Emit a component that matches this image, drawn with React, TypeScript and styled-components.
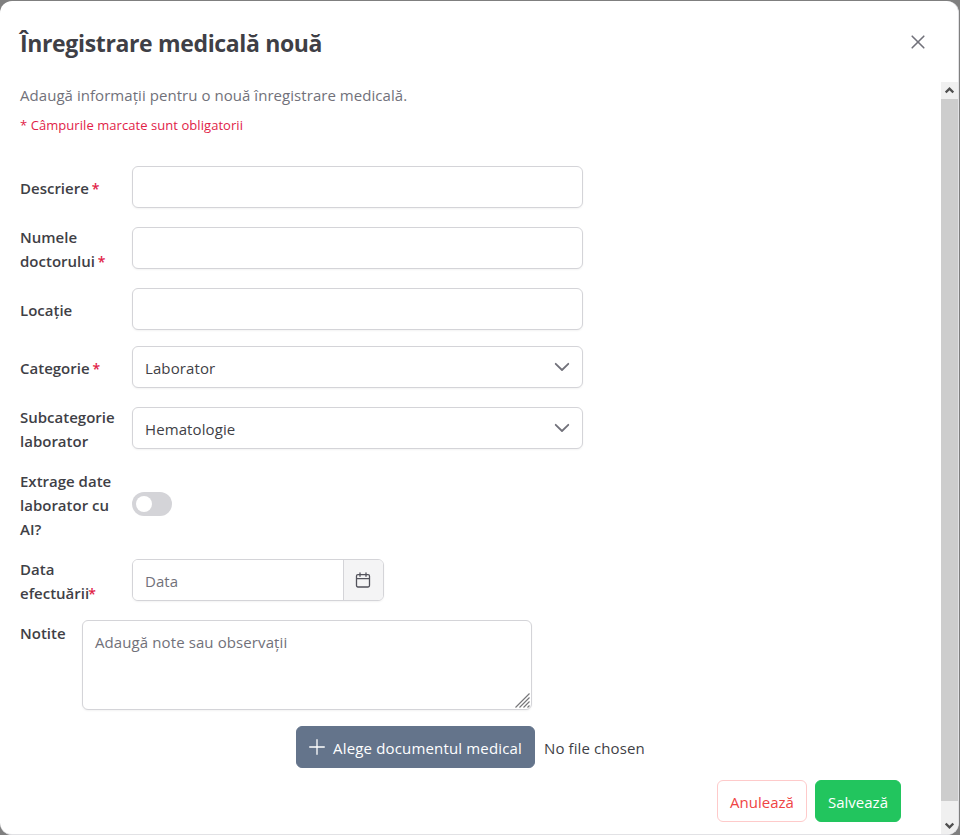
import React from "react";
import styled, { createGlobalStyle } from "styled-components";

const GlobalStyle = createGlobalStyle`
  * { box-sizing: border-box; }
  body { margin: 0; background: #7f7f7f; overflow: hidden; }
  body, input, textarea, button {
    font-family: "Open Sans", "Noto Sans", sans-serif;
    font-size: 15px;
    line-height: 24px;
    letter-spacing: 0.05px;
    color: #3f3f46;
  }
`;

const Dialog = styled.section`
  width: 959px;
  height: 834px;
  margin-top: 1px;
  display: flex;
  flex-direction: column;
  background: #fff;
  border: 1px solid #e2e2e5;
  border-left: 0;
  border-top: 0;
  border-radius: 12px;
  overflow: hidden;
`;

const Header = styled.header`
  flex: none;
  height: 81px;
  padding: 0 32px 0 20px;
  display: flex;
  align-items: center;
  justify-content: space-between;
`;

const Title = styled.h1`
  margin: 2px 0 0;
  font-size: 23px;
  font-weight: 700;
  line-height: 32px;
  letter-spacing: -0.35px;
`;

const CloseButton = styled.button`
  width: 16px;
  height: 16px;
  padding: 0;
  border: 0;
  background: none;
  color: #71717a;
  display: flex;
`;

const Body = styled.div`
  flex: 1;
  min-height: 0;
  display: flex;
`;

const Content = styled.div`
  flex: 1;
  padding: 0 0 0 20px;
`;

const Intro = styled.p`
  margin: 1px 0 0;
  color: #71717a;
`;

const RequiredNote = styled.p`
  margin: 9px 0 31px;
  font-size: 13px;
  line-height: 19px;
  letter-spacing: 0.06px;
  color: #e11d48;
`;

const Form = styled.div`
  display: flex;
  flex-direction: column;
  gap: 16px;
`;

const Row = styled.div<{ $top?: boolean }>`
  display: flex;
  align-items: ${(p) => (p.$top ? "flex-start" : "center")};
`;

const Label = styled.label<{ $width?: number }>`
  flex: none;
  width: ${(p) => p.$width ?? 112}px;
  font-weight: 600;
  letter-spacing: 0;
  position: relative;
  top: 1px;
`;

const Star = styled.span`
  color: #e11d48;
  font-size: 14px;
  line-height: 1;
  margin-left: -1px;
`;

const boxed = `
  border: 1px solid #d4d4d8;
  border-radius: 6px;
  background: #fff;
  box-shadow: 0 1px 2px rgba(18, 18, 23, 0.05);
`;

const TextInput = styled.input`
  ${boxed}
  width: 451px;
  height: 42px;
  padding: 8px 12px;
  outline: 0;
`;

const Select = styled.div`
  ${boxed}
  width: 451px;
  height: 42px;
  padding: 2px 12px 0 12px;
  display: flex;
  align-items: center;
  justify-content: space-between;
  letter-spacing: 0.1px;
  svg { margin-top: -2px; color: #71717a; }
`;

const Switch = styled.span`
  width: 40px;
  height: 24px;
  padding: 4px;
  border-radius: 12px;
  background: #d4d4d8;
  &::before {
    content: "";
    display: block;
    width: 16px;
    height: 16px;
    border-radius: 50%;
    background: #fff;
  }
`;

const DateField = styled.div`
  ${boxed}
  width: 252px;
  height: 42px;
  display: flex;
  overflow: hidden;
`;

const DateInput = styled.input`
  flex: 1;
  min-width: 0;
  border: 0;
  padding: 1px 12px 0;
  outline: 0;
  &::placeholder { color: #71717a; opacity: 1; }
`;

const DateButton = styled.button`
  width: 40px;
  padding: 0 2px 0 0;
  border: 0;
  border-left: 1px solid #d4d4d8;
  background: #f4f4f5;
  color: #52525b;
  display: flex;
  align-items: center;
  justify-content: center;
`;

const NotesWrap = styled.div`
  ${boxed}
  width: 450px;
  height: 90px;
  display: flex;
  position: relative;
`;

const Notes = styled.textarea`
  flex: 1;
  border: 0;
  padding: 9px 12px;
  background: none;
  resize: none;
  outline: 0;
  letter-spacing: 0.1px;
  &::placeholder { color: #71717a; opacity: 1; }
`;

const Grip = styled.svg`
  position: absolute;
  right: 0;
  bottom: 0;
`;

const Upload = styled.div`
  display: flex;
  align-items: center;
  gap: 9px;
  padding-left: 276px;
`;

const UploadText = styled.span`
  padding-top: 2px;
  letter-spacing: 0.1px;
`;

const Button = styled.button<{ $tone: "slate" | "green" | "danger"; $width: number }>`
  width: ${(p) => p.$width}px;
  height: 42px;
  padding: 2px 0 0;
  display: flex;
  align-items: center;
  justify-content: center;
  gap: 8px;
  border-radius: 6px;
  white-space: nowrap;
  letter-spacing: ${(p) => (p.$tone === "slate" ? 0.16 : 0)}px;
  border: 1px solid ${(p) => ({ slate: "#64748b", green: "#22c55e", danger: "#fecaca" })[p.$tone]};
  background: ${(p) => ({ slate: "#64748b", green: "#22c55e", danger: "#fff" })[p.$tone]};
  color: ${(p) => (p.$tone === "danger" ? "#ef4444" : "#fff")};
  svg { margin-top: -2px; }
`;

const Actions = styled.div`
  display: flex;
  justify-content: flex-end;
  gap: 8px;
  margin: 12px 40px 0 0;
`;

const Scrollbar = styled.div`
  flex: none;
  width: 17px;
  display: flex;
  flex-direction: column;
  background: #f0f0f0;
`;

const Arrow = styled.span`
  flex: none;
  height: 17px;
  display: flex;
  align-items: center;
  justify-content: center;
`;

const Thumb = styled.span`
  height: 702px;
  margin-bottom: 16px;
  background: #cdcdcd;
`;

const Line = ({ d, size = 16, width = 1.5 }: { d: string; size?: number; width?: number }) => (
  <svg width={size} height={size} viewBox="0 0 16 16" fill="none" stroke="currentColor" strokeWidth={width} strokeLinecap="round" strokeLinejoin="round">
    <path d={d} />
  </svg>
);

const Chevron = () => <Line d="M1.7 4.8 8 11 14.3 4.8" width={1.8} />;

const ScrollChevron = ({ d }: { d: string }) => (
  <svg width="9" height="7" viewBox="0 0 9 7" fill="none" stroke="#505050" strokeWidth="2.3">
    <path d={d} />
  </svg>
);

export default function App() {
  return (
    <>
      <GlobalStyle />
      <Dialog>
        <Header>
          <Title>Înregistrare medicală nouă</Title>
          <CloseButton aria-label="Închide">
            <Line d="M2.2 2.2 13.8 13.8M13.8 2.2 2.2 13.8" width={1.6} />
          </CloseButton>
        </Header>
        <Body>
          <Content>
            <Intro>Adaugă informații pentru o nouă înregistrare medicală.</Intro>
            <RequiredNote>* Câmpurile marcate sunt obligatorii</RequiredNote>
            <Form>
              <Row>
                <Label>Descriere <Star>*</Star></Label>
                <TextInput />
              </Row>
              <Row>
                <Label>Numele<br />doctorului <Star>*</Star></Label>
                <TextInput />
              </Row>
              <Row>
                <Label>Locație</Label>
                <TextInput />
              </Row>
              <Row>
                <Label>Categorie <Star>*</Star></Label>
                <Select>Laborator<Chevron /></Select>
              </Row>
              <Row>
                <Label>Subcategorie<br />laborator</Label>
                <Select>Hematologie<Chevron /></Select>
              </Row>
              <Row>
                <Label>Extrage date<br />laborator cu<br />AI?</Label>
                <Switch />
              </Row>
              <Row>
                <Label>Data<br />efectuării<Star>*</Star></Label>
                <DateField>
                  <DateInput placeholder="Data" />
                  <DateButton aria-label="Calendar">
                    <Line d="M2.9 2.7H13.1Q14.5 2.7 14.5 4.1V13.6Q14.5 15 13.1 15H2.9Q1.5 15 1.5 13.6V4.1Q1.5 2.7 2.9 2.7ZM1.5 6.7H14.5M5 .8V4.3M11 .8V4.3" width={1.3} />
                  </DateButton>
                </DateField>
              </Row>
              <Row $top>
                <Label $width={62}>Notite</Label>
                <NotesWrap>
                  <Notes placeholder="Adaugă note sau observații" />
                  <Grip width="16" height="16" viewBox="0 0 16 16" stroke="#77777a" strokeWidth="1.2">
                    <path d="M0.5 14.5 14.5 0.5M4.5 14.5 14.5 4.5M8.5 14.5 14.5 8.5M12.5 14.5 14.5 12.5" />
                  </Grip>
                </NotesWrap>
              </Row>
              <Upload>
                <Button $tone="slate" $width={239}>
                  <Line d="M8 .7V15.3M.7 8H15.3" width={1.3} />
                  Alege documentul medical
                </Button>
                <UploadText>No file chosen</UploadText>
              </Upload>
            </Form>
            <Actions>
              <Button $tone="danger" $width={90}>Anulează</Button>
              <Button $tone="green" $width={86}>Salvează</Button>
            </Actions>
          </Content>
          <Scrollbar>
            <Arrow><ScrollChevron d="M.7 5.5 4.5 1.7 8.3 5.5" /></Arrow>
            <Thumb />
            <Arrow><ScrollChevron d="M.7 1.5 4.5 5.3 8.3 1.5" /></Arrow>
          </Scrollbar>
        </Body>
      </Dialog>
    </>
  );
}
